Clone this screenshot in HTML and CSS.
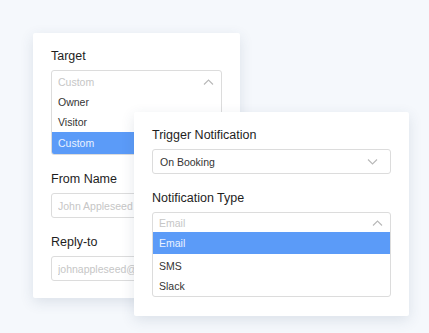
FILE: index.html
```html
<!DOCTYPE html>
<html>
<head>
  <title>Notification Settings</title>
  <link rel="stylesheet" href="styles.css">
</head>
<body>
  <div class="canvas">
    <div class="card card-back">
      <div class="field">
        <label class="field-label">Target</label>
        <div class="dropdown">
          <div class="dropdown-head">
            <span class="placeholder">Custom</span>
            <svg class="chevron" width="11" height="6" viewBox="0 0 11 6" fill="none" stroke="currentColor" stroke-width="1.1"><path d="M1 5.5 5.5 1 10 5.5"/></svg>
          </div>
          <div class="dropdown-item">Owner</div>
          <div class="dropdown-item">Visitor</div>
          <div class="dropdown-item selected">Custom</div>
        </div>
      </div>
      <div class="field">
        <label class="field-label">From Name</label>
        <div class="text-input"><span class="placeholder">John Appleseed</span></div>
      </div>
      <div class="field">
        <label class="field-label">Reply-to</label>
        <div class="text-input"><span class="placeholder">johnappleseed@gmail.com</span></div>
      </div>
    </div>

    <div class="card card-front">
      <div class="field">
        <label class="field-label">Trigger Notification</label>
        <div class="select">
          <span>On Booking</span>
          <svg class="chevron" width="11" height="6" viewBox="0 0 11 6" fill="none" stroke="currentColor" stroke-width="1.1"><path d="M1 0.5 5.5 5 10 0.5"/></svg>
        </div>
      </div>
      <div class="field">
        <label class="field-label">Notification Type</label>
        <div class="dropdown">
          <div class="dropdown-head short">
            <span class="placeholder">Email</span>
            <svg class="chevron" width="11" height="6" viewBox="0 0 11 6" fill="none" stroke="currentColor" stroke-width="1.1"><path d="M1 5.5 5.5 1 10 5.5"/></svg>
          </div>
          <div class="dropdown-item selected tall">Email</div>
          <div class="dropdown-item">SMS</div>
          <div class="dropdown-item">Slack</div>
        </div>
      </div>
    </div>
  </div>
</body>
</html>
```

FILE: styles.css
```css
* {
  box-sizing: border-box;
  margin: 0;
  padding: 0;
}
body {
  width: 429px;
  height: 333px;
  overflow: hidden;
  font-family: 'Liberation Sans', Arial, sans-serif;
  background: #f5f8fc;
}
.canvas {
  position: relative;
  padding: 33px;
  height: 100%;
}
.card {
  background: #fff;
  border-radius: 2px;
  box-shadow: 0 4px 14px rgba(50, 70, 100, 0.13);
  padding: 15px 18px 19px;
  display: flex;
  flex-direction: column;
}
.card-back {
  width: 207px;
  height: 265px;
  gap: 16px;
}
.card-front {
  position: absolute;
  left: 134px;
  top: 112px;
  width: 275px;
  height: 204px;
  gap: 16px;
}
.field {
  display: flex;
  flex-direction: column;
  gap: 6px;
}
.field-label {
  font-size: 12.5px;
  line-height: 16px;
  color: #1e1e1e;
}
.placeholder {
  color: #c6c6c6;
}
.chevron {
  color: #b8b8b8;
  flex-shrink: 0;
}
.dropdown {
  border: 1px solid #dcdcdc;
  border-radius: 3px;
  font-size: 10.5px;
  color: #333;
  overflow: hidden;
}
.dropdown-head {
  height: 21px;
  padding: 0 7px 0 6px;
  display: flex;
  align-items: center;
  justify-content: space-between;
}
.dropdown-head.short {
  height: 19px;
}
.dropdown-item {
  height: 20px;
  padding: 0 6px;
  display: flex;
  align-items: center;
}
.dropdown-item.selected {
  background: #5b9bf8;
  color: #eaf2ff;
  height: 22px;
  margin: 0 -1px;
  padding-left: 7px;
}
.dropdown-item.tall {
  margin-bottom: 2px;
}
.select,
.text-input {
  height: 25px;
  border: 1px solid #dcdcdc;
  border-radius: 3px;
  padding: 0 12px 0 7px;
  display: flex;
  align-items: center;
  justify-content: space-between;
  font-size: 10.5px;
  color: #333;
  white-space: nowrap;
  overflow: hidden;
}
.text-input {
  padding-left: 6px;
}
.text-input .placeholder {
  max-width: 76px;
  overflow: hidden;
}
```
